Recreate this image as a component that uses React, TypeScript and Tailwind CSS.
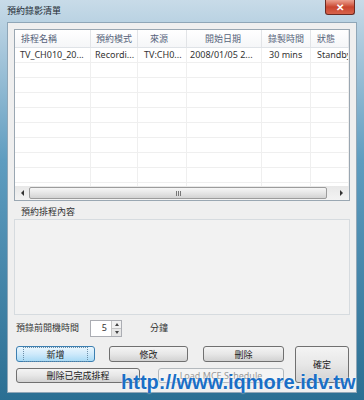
import React from 'react';

type Column = {
  title: string;
  value: string;
  width: string;
  head: string;
  cell: string;
};

const columns: Column[] = [
  { title: '排程名稱', value: 'TV_CH010_20...', width: 'w-[76px]', head: 'pl-[6px]', cell: 'pl-[5px]' },
  { title: '預約模式', value: 'Recordi...', width: 'w-[47px]', head: 'pl-[5px]', cell: 'pl-[4px]' },
  { title: '來源', value: 'TV:CH0...', width: 'w-[49px]', head: 'pl-[12px]', cell: 'pl-[6px]' },
  { title: '開始日期', value: '2008/01/05 2...', width: 'w-[75px]', head: 'pl-[18px]', cell: 'pl-[3px]' },
  { title: '錄製時間', value: '30 mins', width: 'w-[49px]', head: 'pl-[6px]', cell: 'pl-[7px]' },
  { title: '狀態', value: 'Standby', width: 'flex-1', head: 'pl-[6px]', cell: 'pl-[6px]' },
];

const emptyRows = [1, 2, 3, 4, 5, 6, 7, 8, 9];

function Button({
  label,
  className,
  focused,
  disabled,
}: {
  label: string;
  className: string;
  focused?: boolean;
  disabled?: boolean;
}) {
  let look =
    'border-[#707070] bg-gradient-to-b from-[#f4f4f4] via-[#e7e7e7] to-[#d2d2d2] text-[#222]';
  if (focused) {
    look =
      'border-[#3c7fb1] bg-gradient-to-b from-[#eaf6fd] via-[#cfeafb] to-[#a9daf5] text-[#222]';
  }
  if (disabled) {
    look = 'border-[#b4b9bd] bg-[#f4f4f4] text-[#9a9a9a]';
  }
  return (
    <div
      className={
        'flex items-center justify-center rounded-[3px] border text-[9px] leading-none ' +
        look +
        ' ' +
        className
      }
    >
      <span className={focused ? 'border border-dotted border-[#6d8fa8] px-[22px] py-[2px]' : ''}>
        {label}
      </span>
    </div>
  );
}

function ListView() {
  return (
    <div className="flex h-[172px] w-[336px] flex-col overflow-hidden border border-[#9aa7b2] bg-white">
      {/* Header */}
      <div className="flex h-[18px] shrink-0 border-b border-[#dfe3e7] bg-gradient-to-b from-white to-[#f5f6f8]">
        {columns.map((col) => (
          <div
            key={col.title}
            className={
              'flex items-center border-r border-[#e2e4e7] text-[9px] text-[#56637a] ' +
              col.width +
              ' ' +
              col.head
            }
          >
            {col.title}
          </div>
        ))}
      </div>

      {/* Rows */}
      <div className="flex flex-1 flex-col overflow-hidden">
        <div className="flex h-[15px] shrink-0 border-b border-[#efefef]">
          {columns.map((col) => (
            <div
              key={col.title}
              className={
                'flex items-center overflow-hidden whitespace-nowrap border-r border-[#efefef] text-[9px] text-[#333] ' +
                col.width +
                ' ' +
                col.cell
              }
            >
              {col.value}
            </div>
          ))}
        </div>
        {emptyRows.map((r) => (
          <div key={r} className="flex h-[15px] shrink-0 border-b border-[#efefef]">
            {columns.map((col) => (
              <div key={col.title} className={'border-r border-[#efefef] ' + col.width} />
            ))}
          </div>
        ))}
      </div>

      {/* Horizontal scrollbar */}
      <div className="flex h-[14px] shrink-0 items-center bg-gradient-to-b from-[#e8e8e8] to-[#f3f3f3]">
        <div className="flex w-[14px] items-center justify-center">
          <div className="h-0 w-0 border-y-[3px] border-r-[3px] border-y-transparent border-r-[#333]" />
        </div>
        <div className="flex h-[12px] w-[298px] items-center justify-center rounded-[2px] border border-[#9c9c9c] bg-gradient-to-b from-[#f6f6f6] via-[#e6e6e6] to-[#d3d3d3]">
          <div className="flex gap-[1px]">
            <div className="h-[5px] w-[1px] bg-[#777]" />
            <div className="h-[5px] w-[1px] bg-[#777]" />
            <div className="h-[5px] w-[1px] bg-[#777]" />
          </div>
        </div>
        <div className="flex flex-1 items-center justify-end pr-[6px]">
          <div className="h-0 w-0 border-y-[3px] border-l-[3px] border-y-transparent border-l-[#333]" />
        </div>
      </div>
    </div>
  );
}

export default function App() {
  return (
    <div className="relative flex h-[400px] w-[364px] flex-col overflow-hidden bg-gradient-to-b from-[#c8dbe8] via-[#5f9dc0] via-40% to-[#2a6f93] px-[7px] pb-[7px] font-['Noto_Sans','Noto_Sans_CJK_TC',sans-serif]">
      {/* Title bar */}
      <div className="flex h-[22px] shrink-0 items-start justify-between">
        <div className="flex h-[22px] items-center text-[9px] text-[#1e2a33]">預約錄影清單</div>
        <div className="mr-[2px] flex h-[15px] w-[30px] items-center justify-center rounded-b-[3px] border border-t-0 border-[#6b2a22] bg-gradient-to-b from-[#eba190] via-[#c9452f] to-[#d7634b] text-[10px] font-bold leading-none text-white">
          ✕
        </div>
      </div>

      {/* Client area */}
      <div className="flex flex-1 flex-col border border-[#8fa6b7] bg-[#efefef] pl-[6px] pt-[6px]">
        <ListView />

        <div className="flex h-[18px] items-center pl-[7px] pt-[4px] text-[9px] text-[#333]">
          預約排程內容
        </div>

        <div className="h-[96px] w-[336px] border border-[#d6dbdf] bg-[#f2f2f2]" />

        {/* Wake-up time */}
        <div className="mt-[4px] flex h-[18px] items-center pl-[2px] text-[9px] text-[#333]">
          <span className="w-[74px]">預錄前開機時間</span>
          <div className="flex h-[17px] w-[32px] border border-[#abadb3] bg-white">
            <div className="flex flex-1 items-center justify-end pr-[4px] text-[9px]">5</div>
            <div className="flex w-[10px] flex-col border-l border-[#c5c5c5]">
              <div className="flex flex-1 items-center justify-center border-b border-[#c5c5c5] bg-[#f1f1f1]">
                <div className="h-0 w-0 border-x-[2px] border-b-[3px] border-x-transparent border-b-[#444]" />
              </div>
              <div className="flex flex-1 items-center justify-center bg-[#e6e6e6]">
                <div className="h-0 w-0 border-x-[2px] border-t-[3px] border-x-transparent border-t-[#444]" />
              </div>
            </div>
          </div>
          <span className="ml-[28px]">分鐘</span>
        </div>

        {/* Buttons */}
        <div className="mt-[9px] flex">
          <div className="flex flex-col gap-[6px] pl-[2px]">
            <div className="flex h-[16px]">
              <Button label="新增" className="w-[79px]" focused />
              <Button label="修改" className="ml-[14px] w-[79px]" />
              <Button label="刪除" className="ml-[15px] w-[81px]" />
            </div>
            <div className="flex h-[15px]">
              <Button label="刪除已完成排程" className="w-[124px]" />
              <Button label="Load MCE Schedule" className="ml-[18px] w-[126px]" disabled />
            </div>
          </div>
          <Button label="確定" className="ml-[11px] h-[37px] w-[54px]" />
        </div>
      </div>

      {/* Watermark */}
      <div className="absolute left-[121px] top-[372px] font-['Liberation_Sans',sans-serif] text-[20px] font-bold leading-[20px] text-[#1a6fc6] [text-shadow:0_0_2px_#ffffff]">
        http://www.iqmore.idv.tw
      </div>
    </div>
  );
}
